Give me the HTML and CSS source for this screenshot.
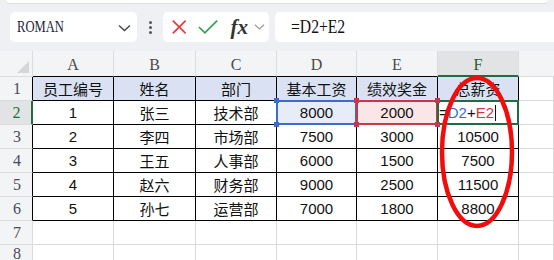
FILE: index.html
```html
<!DOCTYPE html>
<html lang="zh-CN">
<head>
    <meta charset="UTF-8">
    <title>工资表</title>
    <link rel="stylesheet" href="styles.css">
</head>
<body>
    <div class="ribbon-edge"></div>
    <div class="toolbar">
        <div class="name-box">
            <span class="name-text">ROMAN</span>
            <svg class="chev" width="13" height="8" viewBox="0 0 13 8"><path d="M1 1.5 L6.5 6.5 L12 1.5" fill="none" stroke="#444" stroke-width="1.4"/></svg>
        </div>
        <div class="dots"><i></i><i></i><i></i></div>
        <div class="fn-box">
            <svg width="18" height="18" viewBox="0 0 18 18"><path d="M2 2 L16 16 M16 2 L2 16" stroke="#e8383d" stroke-width="1.8" fill="none"/></svg>
            <svg width="22" height="16" viewBox="0 0 22 16"><path d="M1 8 L7.5 14.5 L21 1" stroke="#2da44e" stroke-width="1.8" fill="none"/></svg>
            <span class="fx">fx</span>
            <svg width="12" height="8" viewBox="0 0 12 8"><path d="M1 1.5 L6 6 L11 1.5" fill="none" stroke="#9a9a9a" stroke-width="1.3"/></svg>
        </div>
        <div class="formula-box"><span class="formula-text">=D2+E2</span></div>
    </div>

    <div class="sheet">
        <div class="grid">
            <div class="corner"><span class="tri"></span></div>
            <div class="col-h">A</div>
            <div class="col-h">B</div>
            <div class="col-h">C</div>
            <div class="col-h">D</div>
            <div class="col-h">E</div>
            <div class="col-h active">F</div>
            <div class="col-h last"></div>

            <div class="row-h in">1</div>
            <div class="c d head">员工编号</div>
            <div class="c d head">姓名</div>
            <div class="c d head">部门</div>
            <div class="c d head">基本工资</div>
            <div class="c d head">绩效奖金</div>
            <div class="c d head">总薪资</div>
            <div class="c"></div>

            <div class="row-h in active">2</div>
            <div class="c d">1</div>
            <div class="c d">张三</div>
            <div class="c d">技术部</div>
            <div class="c d ref-blue">8000</div>
            <div class="c d ref-red">2000</div>
            <div class="c d editing">=<span class="t-blue">D2</span>+<span class="t-red">E2</span><span class="caret"></span></div>
            <div class="c"></div>

            <div class="row-h in">3</div>
            <div class="c d">2</div>
            <div class="c d">李四</div>
            <div class="c d">市场部</div>
            <div class="c d">7500</div>
            <div class="c d">3000</div>
            <div class="c d">10500</div>
            <div class="c"></div>

            <div class="row-h in">4</div>
            <div class="c d">3</div>
            <div class="c d">王五</div>
            <div class="c d">人事部</div>
            <div class="c d">6000</div>
            <div class="c d">1500</div>
            <div class="c d">7500</div>
            <div class="c"></div>

            <div class="row-h in">5</div>
            <div class="c d">4</div>
            <div class="c d">赵六</div>
            <div class="c d">财务部</div>
            <div class="c d">9000</div>
            <div class="c d">2500</div>
            <div class="c d">11500</div>
            <div class="c"></div>

            <div class="row-h in">6</div>
            <div class="c d">5</div>
            <div class="c d">孙七</div>
            <div class="c d">运营部</div>
            <div class="c d">7000</div>
            <div class="c d">1800</div>
            <div class="c d">8800</div>
            <div class="c"></div>

            <div class="row-h">7</div>
            <div class="c"></div><div class="c"></div><div class="c"></div><div class="c"></div><div class="c"></div><div class="c"></div><div class="c"></div>

            <div class="row-h">8</div>
            <div class="c"></div><div class="c"></div><div class="c"></div><div class="c"></div><div class="c"></div><div class="c"></div><div class="c"></div>
        </div>

        <svg class="circle" width="90" height="170" viewBox="0 0 90 170">
            <ellipse cx="45" cy="80" rx="35" ry="74" fill="none" stroke="#f20d0d" stroke-width="4.5"/>
        </svg>
    </div>
</body>
</html>
```

FILE: styles.css
```css
body { margin: 0; background: #eef0f3; width: 554px; height: 260px; overflow: hidden; }

.ribbon-edge { height: 3px; margin: 0 6px; background: #fff; border-bottom: 1px solid #dcdde0; border-radius: 0 0 6px 6px; }

.toolbar { display: flex; align-items: center; height: 46px; padding: 0 0 0 10px; box-sizing: border-box; }
.name-box { width: 127px; height: 30px; background: #fff; border-radius: 5px; display: flex; align-items: center; justify-content: space-between; padding: 0 6px 0 7px; box-sizing: border-box; }
.name-text { display: inline-block; font-family: "Liberation Serif", serif; font-size: 17px; color: #1d1d3a; transform: scaleX(0.74); transform-origin: left center; }
.chev { margin-top: 2px; }
.dots { width: 26px; display: flex; flex-direction: column; align-items: center; gap: 2px; }
.dots i { width: 3px; height: 3px; background: #555; border-radius: 50%; }
.fn-box { width: 106px; height: 30px; background: #fff; border-radius: 5px; display: flex; align-items: center; padding: 0 4px 0 8px; box-sizing: border-box; }
.fn-box svg:nth-child(2) { margin-left: 11px; }
.fx { font-family: "Liberation Serif", serif; font-style: italic; font-weight: bold; font-size: 21px; color: #333; margin-left: 12px; margin-right: 6px; line-height: 1; }
.formula-box { margin-left: 6px; flex: 1; height: 30px; background: #fff; border-radius: 5px 0 0 5px; display: flex; align-items: center; padding-left: 16px; }
.formula-text { display: inline-block; font-family: "Liberation Serif", serif; font-size: 18px; color: #111; transform: scaleX(0.87); transform-origin: left center; }

.sheet { position: relative; background: #fff; margin-top: 1px; }
.grid { display: grid; grid-template-columns: 33px 81px 82px 81px 80px 81px 81px 1fr; grid-template-rows: 26px repeat(7, 24px); }

.corner { background: #f3f4f5; border-right: 1px solid #dcdcdc; border-bottom: 1px solid #dcdcdc; position: relative; }
.tri { position: absolute; right: 3px; bottom: 3px; width: 0; height: 0; border-left: 12px solid transparent; border-bottom: 12px solid #d6d6d6; }

.col-h { background: #f3f4f5; border-right: 1px solid #dcdcdc; border-bottom: 1px solid #000; font-family: "Liberation Serif", serif; font-size: 16px; color: #4a4a4a; display: flex; align-items: center; justify-content: center; padding-top: 3px; box-sizing: border-box; }
.col-h.last { border-bottom-color: #dcdcdc; border-right: none; }
.col-h.active { background: #e2e3e4; color: #2c5a3a; border-bottom: 2px solid #1f6e43; }

.row-h { background: #f3f4f5; border-right: 1px solid #dcdcdc; border-bottom: 1px solid #dcdcdc; font-family: "Liberation Serif", serif; font-size: 16px; color: #4a4a5a; display: flex; align-items: center; justify-content: center; padding-left: 2px; }
.row-h.in { border-right-color: #000; }
.row-h.active { background: #e2e3e4; color: #1f6e43; border-right: 2px solid #1f6e43; }

.c { border-right: 1px solid #dadada; border-bottom: 1px solid #dadada; font-family: "Liberation Sans", "Noto Sans CJK SC", sans-serif; font-size: 15px; color: #111; display: flex; align-items: center; justify-content: center; position: relative; }
.c.d { border-right-color: #000; border-bottom-color: #000; }
.c.head { background: #d9e1f2; }

.ref-blue { background: #e7edf8; }
.ref-blue::after { content: ""; position: absolute; left: -1px; top: -1px; right: -1px; bottom: -1px; border: 2px solid #3a6bd0; }
.ref-red { background: #fae5e7; }
.ref-red::after { content: ""; position: absolute; left: -1px; top: -1px; right: -1px; bottom: -1px; border: 2px solid #c8374a; }
.ref-blue::before, .ref-red::before { content: ""; position: absolute; left: -3px; top: -3px; width: 5px; height: 5px; z-index: 2; }
.ref-blue::before { background: #3a6bd0; box-shadow: 80px 0 0 #3a6bd0, 0 24px 0 #3a6bd0, 80px 24px 0 #3a6bd0; }
.ref-red::before { background: #c8374a; box-shadow: 81px 0 0 #c8374a, 0 24px 0 #c8374a, 81px 24px 0 #c8374a; }

.editing { justify-content: flex-start; padding-left: 1px; }
.editing::after { content: ""; position: absolute; left: -1px; top: -1px; right: -1px; bottom: -1px; border: 2px solid #1f6e43; }
.t-blue { color: #3a6bd0; }
.t-red { color: #c8374a; }
.caret { display: inline-block; width: 1px; height: 16px; background: #111; margin-left: 1px; }

.circle { position: absolute; left: 432px; top: 21px; }
```
